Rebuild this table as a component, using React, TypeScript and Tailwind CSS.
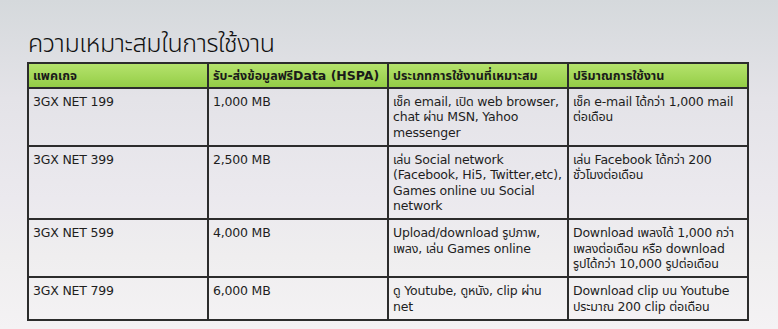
const packages = [
  {
    name: ["3GX NET 199"],
    data: ["1,000 MB"],
    usage: ["เช็ค email, เปิด web browser,", "chat ผ่าน MSN, Yahoo", "messenger"],
    amount: ["เช็ค e-mail ได้กว่า 1,000 mail", "ต่อเดือน"],
  },
  {
    name: ["3GX NET 399"],
    data: ["2,500 MB"],
    usage: ["เล่น Social network", "(Facebook, Hi5, Twitter,etc),", "Games online บน Social", "network"],
    amount: ["เล่น Facebook ได้กว่า 200", "ชั่วโมงต่อเดือน"],
  },
  {
    name: ["3GX NET 599"],
    data: ["4,000 MB"],
    usage: ["Upload/download รูปภาพ,", "เพลง, เล่น Games online"],
    amount: ["Download เพลงได้ 1,000 กว่า", "เพลงต่อเดือน หรือ download", "รูปได้กว่า 10,000 รูปต่อเดือน"],
  },
  {
    name: ["3GX NET 799"],
    data: ["6,000 MB"],
    usage: ["ดู Youtube, ดูหนัง, clip ผ่าน", "net"],
    amount: ["Download clip บน Youtube", "ประมาณ 200 clip ต่อเดือน"],
  },
]

const headers = ["แพคเกจ", "รับ-ส่งข้อมูลฟรีData (HSPA)", "ประเภทการใช้งานที่เหมาะสม", "ปริมาณการใช้งาน"]

export default function App() {
  return (
    <div className="w-[778px] h-[329px] overflow-hidden bg-[linear-gradient(to_bottom,#d5d9dc_0%,#e4e3e8_30%,#ebe9ee_60%,#efeeef_78%,#f4f2f4_100%)] font-['Tahoma','DejaVu_Sans','Noto_Sans_Thai',sans-serif] text-[#1e1e1e]">
      <div className="pl-[28px] pt-[29px]">
        <h1 className="h-[33px] text-[25px] leading-[30px] font-light tracking-[-0.4px] text-[#111] font-['Noto_Sans_Thai','Noto_Sans',sans-serif]">
          ความเหมาะสมในการใช้งาน
        </h1>

        <table className="w-[722px] table-fixed border-collapse border-2 border-[#2c2c2c] text-[12.5px] leading-[15.5px] tracking-[-0.2px] -ml-px">
          <thead>
            <tr className="bg-[linear-gradient(to_bottom,#b6e36e,#93cd45)]">
              {headers.map((h) => (
                <th
                  key={h}
                  className="border-2 border-[#2c2c2c] pl-[4px] pt-[4px] pb-[3px] text-left font-bold text-[#1a1a1a] whitespace-nowrap tracking-normal"
                >
                  {h}
                </th>
              ))}
            </tr>
          </thead>
          <tbody>
            {packages.map((p) => (
              <tr key={p.name[0]}>
                {[p.name, p.data, p.usage, p.amount].map((lines, i) => (
                  <td
                    key={i}
                    className="border-2 border-[#2c2c2c] pl-[4px] pr-0 pt-[5px] pb-[4.5px] align-top"
                  >
                    {lines.map((l) => (
                      <div key={l} className="whitespace-nowrap">
                        {l}
                      </div>
                    ))}
                  </td>
                ))}
              </tr>
            ))}
          </tbody>
        </table>
      </div>
    </div>
  )
}
